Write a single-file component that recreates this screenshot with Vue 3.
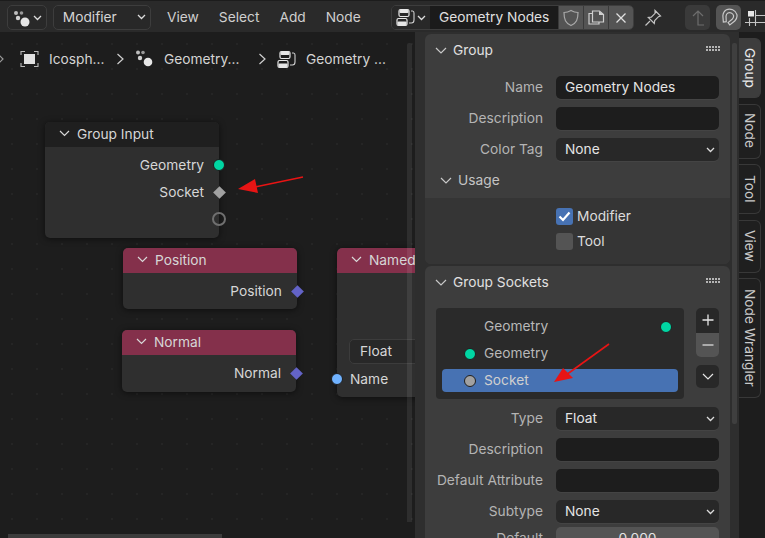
<script setup>
const formTop = [
  { label: 'Name', value: 'Geometry Nodes', kind: 'text' },
  { label: 'Description', value: '', kind: 'text' },
  { label: 'Color Tag', value: 'None', kind: 'select' },
]
const formBottom = [
  { label: 'Type', value: 'Float', kind: 'select' },
  { label: 'Description', value: '', kind: 'text' },
  { label: 'Default Attribute', value: '', kind: 'text' },
  { label: 'Subtype', value: 'None', kind: 'select' },
]
const tabs = [
  { name: 'Group', h: 60, active: true },
  { name: 'Node', h: 55 },
  { name: 'Tool', h: 50 },
  { name: 'View', h: 53 },
  { name: 'Node Wrangler', h: 120 },
]
</script>

<template>
  <div class="app">
    <header class="topbar">
      <div class="btn editor-btn">
        <svg class="ico" width="20" height="18" viewBox="0 0 20 18"><circle cx="4" cy="4" r="2" fill="#bdbdbd"/><circle cx="9.500" cy="4" r="1.800" fill="#999"/><circle cx="6" cy="9" r="2.200" fill="#d0d0d0"/><circle cx="13" cy="13" r="4.500" fill="#e6e6e6"/></svg>
        <svg class="chev" width="9" height="6" viewBox="0 0 9 6"><path d="M1 1l3.500 3.500L8 1" /></svg>
      </div>
      <div class="btn mode-btn">
        <span>Modifier</span>
        <svg class="chev" width="9" height="6" viewBox="0 0 9 6"><path d="M1 1l3.500 3.500L8 1" /></svg>
      </div>
      <nav class="menu">
        <span>View</span><span>Select</span><span>Add</span><span>Node</span>
      </nav>
      <div class="group-picker">
        <div class="picker-type">
          <svg width="20" height="19" viewBox="0 0 20 19"><use href="#tree-ico" /></svg>
          <svg class="chev" width="9" height="6" viewBox="0 0 9 6"><path d="M1 1l3.500 3.500L8 1" /></svg>
        </div>
        <div class="picker-name">Geometry Nodes</div>
        <div class="picker-act">
          <svg width="18" height="18" viewBox="0 0 18 18"><path d="M9 1.500c2.500 1.500 4.500 2 7 2 0 7-1.500 10.500-7 13-5.500-2.500-7-6-7-13 2.500 0 4.500-.5 7-2z" fill="none" stroke="#a9a9a9" stroke-width="1.200"/></svg>
        </div>
        <div class="picker-act">
          <svg width="20" height="18" viewBox="0 0 20 18"><path d="M6 4.500H3v10.500h10v-2.500M6.500 2h7l4 3.500v7.500H6.500z" fill="none" stroke="#d0d0d0" stroke-width="1.200"/><path d="M13 2l5 4h-5z" fill="#d0d0d0"/></svg>
        </div>
        <div class="picker-act last">
          <svg width="14" height="14" viewBox="0 0 14 14"><path d="M2.500 2.500l9 9M11.500 2.500l-9 9" stroke="#e0e0e0" stroke-width="1.300"/></svg>
        </div>
      </div>
      <svg class="pin" width="20" height="20" viewBox="0 0 20 20"><path d="M12 2.500l5.500 5.500-2 .7-3.800 3.800-.4 3-6-6 3-.4 3.800-3.800zM7 13l-4.500 4.500" fill="none" stroke="#c4c4c4" stroke-width="1.200"/></svg>
      <div class="tool up">
        <svg width="16" height="18" viewBox="0 0 16 18"><path d="M3 7l5-5 5 5M8 2v14h6" fill="none" stroke="#6d6d6d" stroke-width="1.200"/></svg>
      </div>
      <div class="tool snap">
        <svg width="20" height="20" viewBox="0 0 20 20"><path transform="rotate(24 10 10)" d="M3.500 10.500l3 5.500 2.500-1.500-2.500-5c-1-3 1-5 3.500-5s4.500 2 3.500 5l-2.500 5 2.500 1.500 3-5.500c2-6-2-9.500-6.500-9.500S1.500 4.500 3.500 10.500z" fill="none" stroke="#c8c8c8" stroke-width="1.200"/></svg>
      </div>
      <svg class="gridico" width="20" height="20" viewBox="0 0 20 20"><rect x="3" y="3" width="6" height="5.500" fill="#e6e6e6"/><path d="M10.500 2v16M4.500 10v8M11 7.500h9M0 14.500h20" stroke="#c4c4c4" stroke-width="1.100" fill="none"/></svg>
    </header>

    <svg width="0" height="0" class="defs">
      <symbol id="tree-ico" viewBox="0 0 20 19">
        <rect x="3" y="1.500" width="10" height="7" rx="1.500" fill="none" stroke="#e6e6e6" stroke-width="1.200"/>
        <rect x="3.500" y="2" width="9" height="3" rx="1" fill="#e6e6e6"/>
        <rect x="1" y="10.500" width="10" height="7" rx="1.500" fill="none" stroke="#e6e6e6" stroke-width="1.200"/>
        <rect x="1.500" y="13.500" width="9" height="3.500" rx="1" fill="#e6e6e6"/>
        <path d="M15 3h1.500c1 0 1.500 1 1.500 2v7c0 2-1 3-2.500 3H13" fill="none" stroke="#cfcfcf" stroke-width="1.100"/>
      </symbol>
    </svg>

    <div class="workspace">
      <main class="canvas">
        <div class="crumbs">
          <svg class="crumb-lead" width="6" height="10" viewBox="0 0 6 10"><path d="M1 1l4 4-4 4" fill="none" stroke="#9a9a9a" stroke-width="1.200"/></svg>
          <svg class="crumb-ico" width="19" height="18" viewBox="0 0 19 18"><rect x="4" y="4" width="11" height="10" fill="#e0e0e0"/><path d="M1 5V1.500h4M14 1.500h4V5M18 13v3.500h-4M5 16.500H1V13" fill="none" stroke="#b8b8b8" stroke-width="1.100"/></svg>
          <span class="c1">Icosph...</span>
          <svg class="sep" width="9" height="12" viewBox="0 0 9 12"><path d="M1.500 1l5.500 5-5.500 5" fill="none" stroke="#d0d0d0" stroke-width="1.200"/></svg>
          <svg class="crumb-ico2" width="20" height="18" viewBox="0 0 20 18"><circle cx="3" cy="2.500" r="2" fill="#bdbdbd"/><circle cx="8" cy="2.500" r="1.800" fill="#999"/><circle cx="5" cy="8" r="2.200" fill="#d0d0d0"/><circle cx="13" cy="12" r="4.300" fill="#e6e6e6"/></svg>
          <span class="c2">Geometry...</span>
          <svg class="sep sep2" width="9" height="12" viewBox="0 0 9 12"><path d="M1.500 1l5.500 5-5.500 5" fill="none" stroke="#d0d0d0" stroke-width="1.200"/></svg>
          <svg class="crumb-ico3" width="20" height="19" viewBox="0 0 20 19"><use href="#tree-ico" /></svg>
          <span class="c3">Geometry ...</span>
        </div>

        <section class="node input-node">
          <div class="node-head dark"><svg class="nchev" width="11" height="7" viewBox="0 0 11 7"><path d="M1 1l4.500 4.500L10 1"/></svg>Group Input</div>
          <div class="out r1">Geometry<i class="sock geo"></i></div>
          <div class="out r2">Socket<i class="sock dia grey"></i></div>
          <div class="out r3"><i class="sock empty"></i></div>
        </section>

        <section class="node pos-node">
          <div class="node-head red"><svg class="nchev" width="11" height="7" viewBox="0 0 11 7"><path d="M1 1l4.500 4.500L10 1"/></svg>Position</div>
          <div class="out vec">Position<i class="sock dia blue"></i></div>
        </section>

        <section class="node norm-node">
          <div class="node-head red"><svg class="nchev" width="11" height="7" viewBox="0 0 11 7"><path d="M1 1l4.500 4.500L10 1"/></svg>Normal</div>
          <div class="out vec">Normal<i class="sock dia blue"></i></div>
        </section>

        <section class="node named-node">
          <div class="node-head red"><svg class="nchev" width="11" height="7" viewBox="0 0 11 7"><path d="M1 1l4.500 4.500L10 1"/></svg>Named</div>
          <div class="float-field">Float</div>
          <div class="name-row">Name</div>
        </section>
        <i class="sock str"></i>

        <div class="v-scroll"></div>
        <div class="h-scroll"></div>

        <svg class="arrow a1" width="70" height="24" viewBox="0 0 70 24"><path d="M68 4L20 14" stroke="#e81414" stroke-width="1.600"/><path d="M3 16L20 6l3 14z" fill="#e81414"/></svg>
      </main>

      <aside class="sidebar">
        <div class="side-main">
          <div class="panels">
            <section class="panel group-panel">
              <div class="panel-head">
                <svg class="pchev" width="12" height="7" viewBox="0 0 12 7"><path d="M1 1l5 5 5-5"/></svg>
                <span>Group</span>
                <span class="grip"></span>
              </div>
              <div class="fields">
                <div v-for="f in formTop" :key="f.label" class="field">
                  <label>{{ f.label }}</label>
                  <div class="control" :class="f.kind">
                    {{ f.value }}
                    <svg v-if="f.kind === 'select'" class="chev" width="9" height="6" viewBox="0 0 9 6"><path d="M1 1l3.500 3.500L8 1" /></svg>
                  </div>
                </div>
              </div>
              <div class="sub-head">
                <svg class="pchev" width="12" height="7" viewBox="0 0 12 7"><path d="M1 1l5 5 5-5"/></svg>
                <span>Usage</span>
              </div>
              <div class="usage">
                <div class="check-row">
                  <span class="check on"><svg width="13" height="11" viewBox="0 0 13 11"><path d="M1.500 5.500l3.500 3.500 6.500-7.500" fill="none" stroke="#fff" stroke-width="2.200"/></svg></span><span class="check-label">Modifier</span>
                </div>
                <div class="check-row"><span class="check"></span><span class="check-label">Tool</span></div>
              </div>
            </section>

            <section class="panel sockets-panel">
              <div class="panel-head">
                <svg class="pchev" width="12" height="7" viewBox="0 0 12 7"><path d="M1 1l5 5 5-5"/></svg>
                <span>Group Sockets</span>
                <span class="grip"></span>
              </div>
              <div class="sockets-body">
                <div class="list">
                  <div class="item">Geometry<i class="dot teal right"></i></div>
                  <div class="item"><i class="dot teal"></i>Geometry</div>
                  <div class="item sel"><i class="dot grey"></i>Socket</div>
                </div>
                <div class="list-btns">
                  <div class="stack">
                    <div class="lb plus"><svg width="14" height="14" viewBox="0 0 14 14"><path d="M7 1.500v11M1.500 7h11" stroke="#e6e6e6" stroke-width="1.300"/></svg></div>
                    <div class="lb minus"><svg width="14" height="14" viewBox="0 0 14 14"><path d="M1.500 7h11" stroke="#c8c8c8" stroke-width="1.300"/></svg></div>
                  </div>
                  <div class="lb more"><svg width="12" height="7" viewBox="0 0 12 7"><path d="M1 1l5 5 5-5" fill="none" stroke="#e6e6e6" stroke-width="1.200"/></svg></div>
                </div>
                <svg class="arrow a2" width="64" height="46" viewBox="0 0 64 46"><path d="M59 4L16 35" stroke="#e81414" stroke-width="1.600"/><path d="M4 42l9-14 10 10z" fill="#e81414"/></svg>
              </div>
              <div class="fields lower">
                <div v-for="f in formBottom" :key="f.label" class="field">
                  <label>{{ f.label }}</label>
                  <div class="control" :class="f.kind">
                    {{ f.value }}
                    <svg v-if="f.kind === 'select'" class="chev" width="9" height="6" viewBox="0 0 9 6"><path d="M1 1l3.500 3.500L8 1" /></svg>
                  </div>
                </div>
                <div class="field default-field">
                  <label>Default</label>
                  <div class="control number">0.000</div>
                </div>
              </div>
            </section>
          </div>
          <div class="side-scroll"></div>
        </div>
        <div class="tabs">
          <div v-for="t in tabs" :key="t.name" class="tab" :class="{ active: t.active }" :style="{ height: t.h + 'px' }">
            <span>{{ t.name }}</span>
          </div>
        </div>
      </aside>
    </div>
  </div>
</template>

<style>
html, body { margin: 0; background: #1d1d1d; overflow: hidden; }
</style>

<style scoped>
.app {
  width: 765px;
  height: 538px;
  overflow: hidden;
  display: flex;
  flex-direction: column;
  font-family: Inter, "Noto Sans", sans-serif;
  font-size: 13.75px;
  color: #d4d4d4;
  background: #1d1d1d;
}
.defs { position: absolute; }
svg { display: block; flex: none; }
.chev path { fill: none; stroke: #dcdcdc; stroke-width: 1.300; }

.topbar {
  height: 32px;
  flex: none;
  box-sizing: border-box;
  background: #2a2a2a;
  display: flex;
  align-items: center;
  padding: 2px 0 0 7px;
  border-top: 1px solid #1c1c1c;
}
.btn {
  box-sizing: border-box;
  height: 25px;
  border: 1px solid #3d3d3d;
  border-radius: 5px;
  background: #282828;
  display: flex;
  align-items: center;
}
.editor-btn { width: 40px; padding-left: 4px; gap: 1px; }
.mode-btn { width: 99px; margin-left: 6px; padding: 0 4px 1px 9px; justify-content: space-between; }
.menu { display: flex; gap: 20px; margin-left: 16px; color: #cfcfcf; width: 224px; flex: none; padding-bottom: 1px; }
.group-picker {
  width: 243px;
  height: 25px;
  border-radius: 5px;
  display: flex;
  align-items: stretch;
  overflow: hidden;
  flex: none;
  border: 1px solid #3d3d3d;
  box-sizing: border-box;
}
.picker-type { width: 38px; display: flex; align-items: center; padding-left: 4px; box-sizing: border-box; gap: 1px; background: #282828; flex: none; }
.picker-name { width: 128px; background: #1b1b1b; display: flex; align-items: center; padding: 0 0 1px 9px; box-sizing: border-box; color: #e0e0e0; flex: none; }
.picker-act { flex: 1; background: #545454; display: flex; align-items: center; justify-content: center; border-left: 1px solid #3a3a3a; }
.pin { margin-left: 9px; }
.tool { width: 25px; height: 25px; border-radius: 5px; display: flex; align-items: center; justify-content: center; flex: none; }
.up { background: #3a3a3a; margin-left: 22px; }
.snap { background: #545454; margin-left: 6px; }
.gridico { margin-left: 4px; }

.workspace { flex: 1; display: flex; min-height: 0; }
.canvas {
  width: 415px;
  flex: none;
  position: relative;
  overflow: hidden;
  background-color: #1d1d1d;
  background-image: radial-gradient(circle at 12px 12px, rgba(255,255,255,.035) 1px, transparent 1.200px);
  background-size: 25px 25px;
}

.crumbs { position: absolute; left: 0; top: 0; width: 415px; height: 54px; }
.crumbs > * { position: absolute; }
.crumb-lead { left: -2px; top: 22px; }
.crumb-ico { left: 20px; top: 18px; }
.c1 { left: 49px; top: 19px; }
.sep { left: 116px; top: 21px; }
.crumb-ico2 { left: 135px; top: 18px; }
.c2 { left: 164px; top: 19px; }
.sep2 { left: 258px; }
.crumb-ico3 { left: 277px; top: 18px; }
.c3 { left: 306px; top: 19px; }

.node {
  position: absolute;
  background: #2f2f2f;
  border-radius: 5px;
  box-shadow: 0 1px 6px rgba(0,0,0,.55);
  color: #d6d6d6;
}
.node-head {
  height: 25px;
  border-radius: 5px 5px 0 0;
  display: flex;
  align-items: center;
  padding: 0 0 2px 14px;
  gap: 7px;
  box-sizing: border-box;
}
.nchev path { fill: none; stroke: #d8d8d8; stroke-width: 1.200; }
.dark { background: #1f1f1f; }
.red { background: #84304b; }
.input-node { left: 45px; top: 90px; width: 174px; height: 116px; }
.pos-node { left: 123px; top: 216px; width: 174px; height: 61px; }
.norm-node { left: 122px; top: 298px; width: 174px; height: 62px; }
.named-node { left: 337px; top: 216px; width: 90px; height: 149px; overflow: hidden; }
.out {
  position: absolute;
  right: 15px;
  text-align: right;
  line-height: 18px;
}
.r1 { top: 34px; }
.r2 { top: 61px; }
.r3 { top: 88px; height: 18px; }
.vec { top: 34px; }
.sock { position: absolute; display: block; box-sizing: border-box; }
.out .sock { right: -15px; }
.geo { width: 12px; height: 12px; top: 3px; margin-right: -6px; border-radius: 50%; background: #00d6a3; border: 1px solid #1d1d1d; }
.empty { width: 14px; height: 14px; top: 2px; margin-right: -7px; border-radius: 50%; border: 2px solid #6f6f6f; background: transparent; }
.dia { width: 9px; height: 9px; top: 4.500px; margin-right: -4.500px; transform: rotate(45deg); }
.grey { background: #a1a1a1; }
.blue { background: #6363c7; }
.str { left: 331px; top: 341px; width: 12px; height: 12px; border-radius: 50%; background: #70b2ff; border: 1px solid #1d1d1d; }
.float-field {
  position: absolute;
  left: 12px;
  top: 91px;
  width: 100px;
  height: 25px;
  line-height: 23px;
  box-sizing: border-box;
  padding-left: 10px;
  border: 1px solid #3c3c3c;
  border-radius: 5px;
  background: #282828;
}
.name-row { position: absolute; left: 13px; top: 122px; line-height: 18px; }

.v-scroll { position: absolute; left: 407px; top: 11px; width: 5px; height: 479px; border-radius: 2px 2px 0 0; background: rgba(255,255,255,.08); }
.h-scroll { position: absolute; left: 8px; top: 502px; width: 214px; height: 4px; background: #3c3c3c; }
.arrow { position: absolute; pointer-events: none; }
.a1 { left: 235px; top: 141px; }
.a2 { left: 125px; top: 44px; }

.sidebar { width: 350px; flex: none; display: flex; background: #1d1d1d; }
.side-main { width: 324px; flex: none; display: flex; background: #2e2e2e; overflow: hidden; }
.panels { width: 305px; margin-left: 10px; flex: none; padding-top: 2px; display: flex; flex-direction: column; gap: 2px; }
.panel { background: #3d3d3d; border-radius: 6px; flex: none; }
.group-panel { height: 230px; overflow: hidden; }
.panel-head {
  height: 30px;
  box-sizing: border-box;
  padding: 2px 0 0 10px;
  display: flex;
  align-items: center;
  gap: 6px;
  color: #e0e0e0;
  position: relative;
}
.pchev path { fill: none; stroke: #c8c8c8; stroke-width: 1.200; }
.grip {
  position: absolute;
  right: 9px;
  top: 12px;
  width: 15px;
  height: 6px;
  background-image: radial-gradient(circle at 1px 1px, #b5b5b5 1px, transparent 1.100px);
  background-size: 3px 3px;
}
.fields { display: flex; flex-direction: column; gap: 8px; padding-top: 12px; }
.field { display: flex; align-items: center; height: 23px; flex: none; }
.field label { width: 118px; text-align: right; color: #b4b4b4; flex: none; white-space: nowrap; line-height: 22px; padding-bottom: 1px; }
.control {
  margin-left: 13px;
  width: 163px;
  height: 23px;
  line-height: 22px;
  padding-left: 9px;
  box-sizing: border-box;
  border-radius: 5px;
  background: #1d1d1d;
  color: #e4e4e4;
  position: relative;
  box-shadow: 0 1px 0 rgba(255,255,255,.04);
}
.select { background: #282828; }
.select .chev { position: absolute; right: 4px; top: 9px; }
.number { background: #545454; text-align: center; padding-left: 0; }
.sub-head {
  display: flex;
  align-items: center;
  gap: 6px;
  height: 30px;
  padding-left: 15px;
  margin: 4px 0 3px;
  color: #c4c4c4;
}
.usage {
  background: #353535;
  height: 66px;
  padding: 10px 0 0 131px;
  display: flex;
  flex-direction: column;
  gap: 8px;
  box-sizing: border-box;
}
.check-row { display: flex; align-items: center; gap: 4px; height: 17px; color: #dcdcdc; }
.check-label { margin-top: -2px; }
.check { width: 17px; height: 17px; border-radius: 3px; background: #545454; display: flex; align-items: center; justify-content: center; }
.check.on { background: #4772b3; }
.sockets-body { position: relative; display: flex; padding: 12px 0 0 11px; gap: 12px; }
.list { width: 248px; height: 91px; background: #2a2a2a; border-radius: 4px; padding-top: 7px; box-sizing: border-box; }
.item { height: 23px; margin: 0 6px 4px; padding: 0 0 2px 42px; box-sizing: border-box; display: flex; align-items: center; color: #b8b8b8; position: relative; border-radius: 4px; }
.dot { position: absolute; left: 22px; top: 6px; width: 12px; height: 12px; border-radius: 50%; box-sizing: border-box; }
.teal { background: #00d6a3; border: 1px solid #1f1f1f; }
.right { left: 218px; }
.dot.grey { background: #a1a1a1; border: 1px solid #1f1f1f; }
.sel { background: #4772b3; color: #cfcfcf; }
.list-btns { display: flex; flex-direction: column; gap: 8px; }
.stack { border-radius: 5px; overflow: hidden; }
.lb { width: 23px; height: 24.500px; display: flex; align-items: center; justify-content: center; }
.plus { background: #282828; }
.minus { background: #545454; }
.more { background: #282828; border-radius: 5px; height: 23px; }
.lower { padding-top: 8px; }
.default-field { margin-top: -4px; }

.side-scroll { width: 5px; height: 381px; background: #3f3f3f; margin: 11px 0 0 2px; border-radius: 2px; flex: none; }
.tabs { flex: none; width: 22px; padding-top: 6px; display: flex; flex-direction: column; gap: 5.500px; }
.tab {
  box-sizing: border-box;
  border: 1px solid #383838;
  border-left: none;
  border-radius: 0 6px 6px 0;
  background: #1f1f1f;
  color: #c8c8c8;
  display: flex;
  align-items: center;
  justify-content: center;
  flex: none;
}
.tab span { writing-mode: vertical-rl; white-space: nowrap; }
.tab.active { background: #3d3d3d; color: #e8e8e8; border-color: #3d3d3d; }
</style>
